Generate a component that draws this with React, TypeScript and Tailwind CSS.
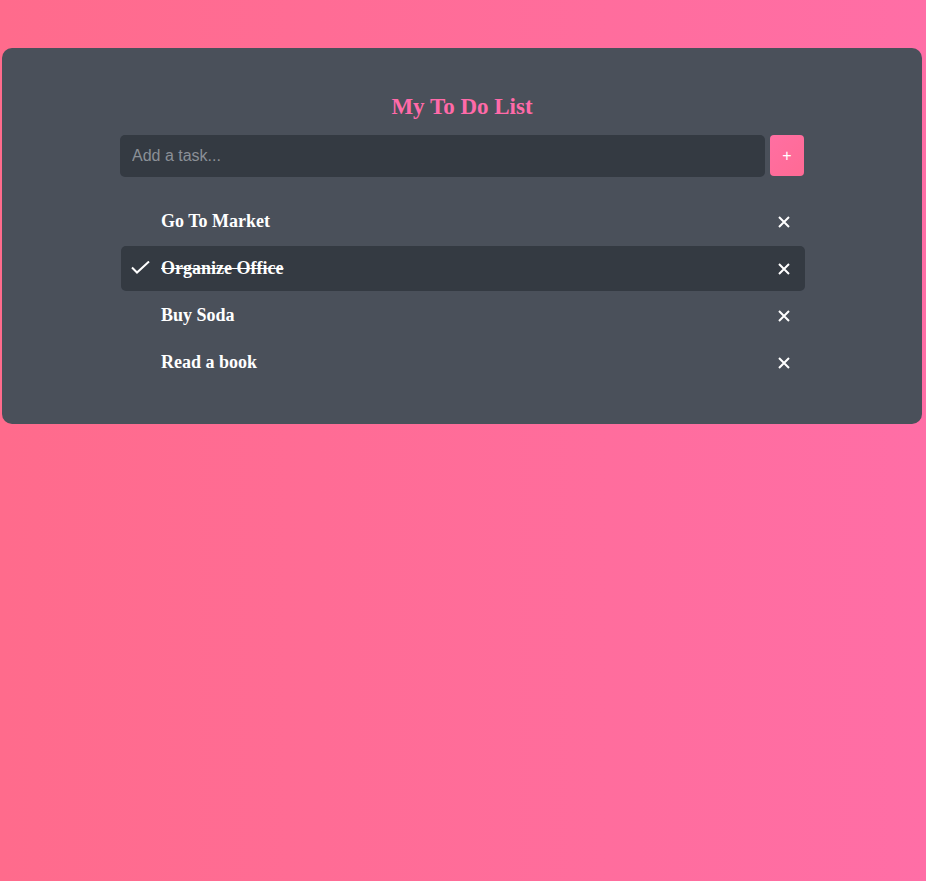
const tasks = [
  { text: "Go To Market", done: false },
  { text: "Organize Office", done: true },
  { text: "Buy Soda", done: false },
  { text: "Read a book", done: false },
];

function CheckIcon() {
  return (
    <svg width="19" height="14" viewBox="0 0 19 14" fill="none">
      <path d="M1 6.5L6 11.5L18 0.5" stroke="white" strokeWidth="2" />
    </svg>
  );
}

function CloseIcon() {
  return (
    <svg width="12" height="12" viewBox="0 0 12 12" fill="none">
      <path d="M1 1L11 11M11 1L1 11" stroke="white" strokeWidth="2" />
    </svg>
  );
}

export default function App() {
  return (
    <div className="min-h-[881px] bg-[linear-gradient(90deg,#ff6b8c,#ff6ea6)] pt-12">
      <div className="ml-[2px] w-[920px] rounded-[10px] bg-[#4a505a] pt-[45px] pb-[39px]">
        <div className="mx-auto w-[684px]">
          <h1 className="text-center font-['Liberation_Serif',serif] text-[23px] leading-[28px] font-bold text-[#ff6aa8]">
            My To Do List
          </h1>
          <div className="mt-[14px] flex gap-[5px]">
            <input
              className="h-[42px] flex-1 rounded-[5px] bg-[#343a42] px-3 font-['Liberation_Sans',sans-serif] text-[16px] text-white outline-none placeholder:text-[#8b9097]"
              placeholder="Add a task..."
            />
            <button className="h-[41px] w-[34px] rounded-[4px] bg-[linear-gradient(135deg,#ff6fa2,#ff6a94)] font-['Liberation_Sans',sans-serif] text-[16px] text-white">
              +
            </button>
          </div>
          <ul className="mt-[22px] ml-px flex w-[684px] flex-col gap-[2px]">
            {tasks.map((t) => (
              <li
                key={t.text}
                className={`flex h-[45px] items-center rounded-[5px] pr-[15px] ${
                  t.done ? "bg-[#343a42]" : ""
                }`}
              >
                <span className="flex w-[40px] justify-start pb-[2px] pl-[10px]">
                  {t.done && <CheckIcon />}
                </span>
                <span
                  className={`flex-1 font-['Liberation_Serif',serif] text-[18px] font-bold text-white ${
                    t.done ? "line-through" : ""
                  }`}
                >
                  {t.text}
                </span>
                <CloseIcon />
              </li>
            ))}
          </ul>
        </div>
      </div>
    </div>
  );
}
